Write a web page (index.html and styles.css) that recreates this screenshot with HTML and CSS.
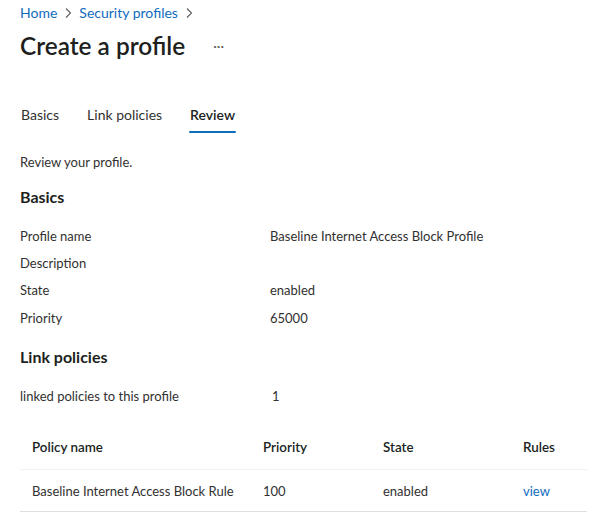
FILE: index.html
```html
<!DOCTYPE html>
<html>
<head>
<meta charset="utf-8">
<link rel="stylesheet" href="styles.css">
</head>
<body>
<div class="page">
  <nav class="crumbs">
    <a class="crumb">Home</a>
    <svg class="chev" viewBox="0 0 8 12" width="8" height="12"><path d="M2 1.5 L6.5 6 L2 10.5" fill="none" stroke="#605e5c" stroke-width="1.1"/></svg>
    <a class="crumb">Security profiles</a>
    <svg class="chev" viewBox="0 0 8 12" width="8" height="12"><path d="M2 1.5 L6.5 6 L2 10.5" fill="none" stroke="#605e5c" stroke-width="1.1"/></svg>
  </nav>
  <div class="titlebar">
    <h1 class="title">Create a profile</h1>
    <span class="more">···</span>
  </div>
  <div class="tabs">
    <span class="tab">Basics</span>
    <span class="tab">Link policies</span>
    <span class="tab active">Review</span>
  </div>
  <p class="intro">Review your profile.</p>
  <h2 class="section">Basics</h2>
  <div class="kv">
    <span class="k">Profile name</span><span class="v">Baseline Internet Access Block Profile</span>
    <span class="k">Description</span><span class="v"></span>
    <span class="k">State</span><span class="v">enabled</span>
    <span class="k">Priority</span><span class="v">65000</span>
  </div>
  <h2 class="section section-2">Link policies</h2>
  <div class="kv kv-single">
    <span class="k">linked policies to this profile</span><span class="v">1</span>
  </div>
  <div class="table">
    <div class="row head">
      <span class="c1">Policy name</span><span class="c2">Priority</span><span class="c3">State</span><span class="c4">Rules</span>
    </div>
    <div class="row body">
      <span class="c1">Baseline Internet Access Block Rule</span><span class="c2">100</span><span class="c3">enabled</span><span class="c4"><a class="link">view</a></span>
    </div>
  </div>
</div>
</body>
</html>
```
FILE: styles.css
```css
* { box-sizing: border-box; }
html, body { margin: 0; padding: 0; background: #fff; }
body {
  font-family: Lato, "Open Sans", sans-serif;
  font-size: 13px;
  color: #323130;
}
.page { padding: 0 20px; }
.crumbs {
  display: flex;
  align-items: center;
  gap: 7px;
  height: 20px;
  margin-top: 2px;
  font-size: 14px;
}
.crumb { color: #0f6cbd; }
.chev { margin-top: 1px; }
.titlebar {
  display: flex;
  align-items: center;
  height: 32px;
  margin-top: 7px;
}
.title {
  margin: 0;
  font-size: 24.4px;
  font-weight: 600;
  color: #201f1e;
}
.more { margin-left: 28px; color: #605e5c; font-size: 14px; }
.tabs {
  display: flex;
  gap: 28px;
  margin-top: 43px;
  height: 32px;
  font-size: 14px;
  padding-left: 1px;
}
.tab { position: relative; line-height: 22px; color: #323130; }
.tab.active { font-weight: 600; color: #201f1e; }
.tab.active::after {
  content: "";
  position: absolute;
  left: -1px; right: -1px;
  top: 27px;
  height: 2px;
  background: #0f6cbd;
  border-radius: 1px;
}
.intro { margin: 16px 0 0; line-height: 20px; }
.section {
  margin: 15px 0 0;
  font-size: 16px;
  font-weight: 700;
  line-height: 20px;
  color: #201f1e;
}
.section-2 { margin-top: 15px; }
.kv {
  display: grid;
  grid-template-columns: 250px 1fr;
  grid-auto-rows: 27.4px;
  margin-top: 15px;
  align-items: center;
}
.kv-single { margin-top: 16px; }
.kv-single .v { padding-left: 2px; }
.table {
  margin-top: 16px;
  width: 567px;
}
.row {
  display: grid;
  grid-template-columns: 231px 120px 140px 1fr;
  padding-left: 12px;
  align-items: center;
  height: 42px;
}
.row.head { font-size: 13.4px; font-weight: 600; color: #201f1e; border-bottom: 1px solid #f3f2f1; height: 44px; }
.row.body { border-bottom: 1px solid #e1dfdd; padding-top: 1px; }
.link { color: #0f6cbd; }
```
